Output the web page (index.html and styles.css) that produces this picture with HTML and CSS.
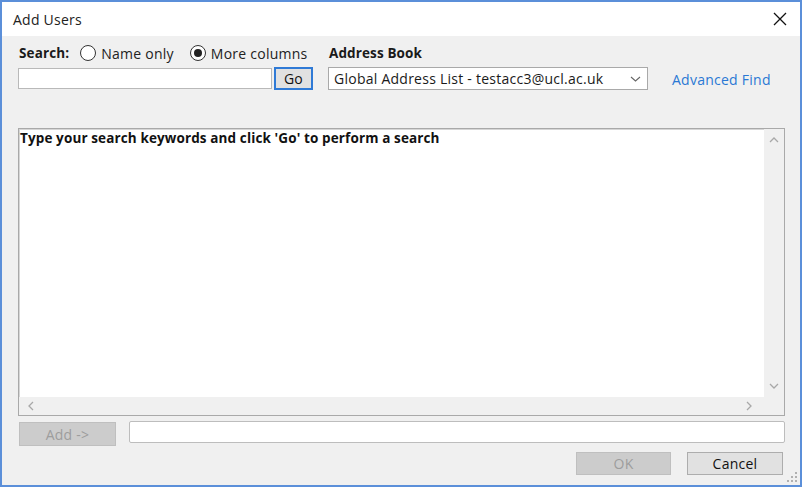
FILE: index.html
```html
<!DOCTYPE html>
<html>
<head>
<meta charset="utf-8">
<link rel="stylesheet" href="styles.css">
</head>
<body>
<div class="window">
  <div class="titlebar">
    <span class="title">Add Users</span>
    <svg class="close" width="14" height="14" viewBox="0 0 14 14"><path d="M1 1 L13 13 M13 1 L1 13" stroke="#111" stroke-width="1.3" fill="none"/></svg>
  </div>
  <div class="body">
    <div class="top">
      <div class="col search-col">
        <div class="row1">
          <span class="lbl">Search:</span>
          <span class="radio first"><span class="circle"></span>Name only</span>
          <span class="radio checked"><span class="circle"></span>More columns</span>
        </div>
        <div class="row2">
          <div class="input search"></div>
          <div class="btn go">Go</div>
        </div>
      </div>
      <div class="col ab-col">
        <div class="row1"><span class="lbl">Address Book</span></div>
        <div class="row2">
          <div class="select">
            <span>Global Address List - testacc3@ucl.ac.uk</span>
            <svg width="11" height="6" viewBox="0 0 11 6"><path d="M1 1 L5.5 5 L10 1" stroke="#666" stroke-width="1.1" fill="none"/></svg>
          </div>
        </div>
      </div>
      <div class="col af-col">
        <div class="row1"></div>
        <div class="row2"><span class="link">Advanced Find</span></div>
      </div>
    </div>
    <div class="list">
      <div class="list-content">Type your search keywords and click 'Go' to perform a search</div>
      <div class="vscroll">
        <svg width="10" height="6" viewBox="0 0 10 6"><path d="M1 5 L5 1 L9 5" stroke="#a8a8a8" stroke-width="1.3" fill="none"/></svg>
        <svg width="10" height="6" viewBox="0 0 10 6"><path d="M1 1 L5 5 L9 1" stroke="#a8a8a8" stroke-width="1.3" fill="none"/></svg>
      </div>
      <div class="hscroll">
        <svg width="6" height="10" viewBox="0 0 6 10"><path d="M5 1 L1 5 L5 9" stroke="#a8a8a8" stroke-width="1.3" fill="none"/></svg>
        <svg width="6" height="10" viewBox="0 0 6 10"><path d="M1 1 L5 5 L1 9" stroke="#a8a8a8" stroke-width="1.3" fill="none"/></svg>
      </div>
      <div class="corner"></div>
    </div>
    <div class="add-row">
      <div class="btn disabled add">Add -&gt;</div>
      <div class="input recip"></div>
    </div>
    <div class="btn-row">
      <div class="btn disabled ok">OK</div>
      <div class="btn cancel">Cancel</div>
    </div>
  </div>
  <svg class="grip" width="10" height="10" viewBox="0 0 10 10">
    <rect x="8" y="0" width="2" height="2" fill="#b0b0b0"/>
    <rect x="4" y="4" width="2" height="2" fill="#b0b0b0"/>
    <rect x="8" y="4" width="2" height="2" fill="#b0b0b0"/>
    <rect x="0" y="8" width="2" height="2" fill="#b0b0b0"/>
    <rect x="4" y="8" width="2" height="2" fill="#b0b0b0"/>
    <rect x="8" y="8" width="2" height="2" fill="#b0b0b0"/>
  </svg>
</div>
</body>
</html>
```

FILE: styles.css
```css
* { box-sizing: border-box; }
html, body { margin: 0; padding: 0; background: #ffffff; }
body {
  font-family: "Open Sans", "Noto Sans", "Liberation Sans", sans-serif;
  font-size: 14px;
  letter-spacing: 0.25px;
  color: #1a1a1a;
}
.window {
  position: relative;
  width: 802px;
  height: 487px;
  border: 2px solid #5b8fd9;
  display: flex;
  flex-direction: column;
  background: #f0f0f0;
}
.titlebar {
  height: 34px;
  flex: none;
  background: #ffffff;
  display: flex;
  align-items: center;
  justify-content: space-between;
  padding: 0 13px 0 11px;
}
.title { color: #222; }
.close { display: block; }
.body {
  flex: 1;
  display: flex;
  flex-direction: column;
  padding: 8px 15px 10px 16px;
}
.top {
  display: flex;
  flex: none;
}
.col { display: flex; flex-direction: column; gap: 5px; }
.search-col { width: 295px; }
.ab-col { width: 320px; margin-left: 15px; }
.af-col { margin-left: 24px; }
.row1 {
  height: 18px;
  display: flex;
  align-items: center;
  white-space: nowrap;
}
.row2 {
  height: 23px;
  display: flex;
  align-items: center;
}
.lbl { font-weight: 700; font-size: 13.5px; letter-spacing: 0.12px; color: #1a1a1a; margin-left: 1px; }
.radio {
  display: flex;
  align-items: center;
  color: #222;
}
.radio.first { margin-left: 11px; }
.radio.checked { margin-left: 16px; }
.circle {
  width: 16px;
  height: 16px;
  border: 1px solid #333;
  border-radius: 50%;
  background: #fff;
  margin-right: 5px;
  display: flex;
  align-items: center;
  justify-content: center;
}
.radio.checked .circle::after {
  content: "";
  width: 8px;
  height: 8px;
  border-radius: 50%;
  background: #222;
}
.input {
  background: #fff;
  border: 1px solid #b9b9b9;
}
.input.search { width: 254px; height: 21px; }
.btn {
  display: flex;
  align-items: center;
  justify-content: center;
  border: 1px solid #adadad;
  background: #e1e1e1;
  color: #111;
}
.btn.go {
  width: 39px;
  height: 23px;
  margin-left: 2px;
  border: 2px solid #2f7ad6;
}
.select {
  width: 320px;
  height: 23px;
  background: #fff;
  border: 1px solid #a9a9a9;
  display: flex;
  align-items: center;
  justify-content: space-between;
  padding: 0 6px 0 5px;
  color: #1a1a1a;
  white-space: nowrap;
}
.select svg { display: block; }
.link { color: #2a78d4; white-space: nowrap; padding-top: 2px; }
.list {
  flex: 1;
  margin-top: 38px;
  background: #fff;
  border: 1px solid #a9a9a9;
  box-shadow: inset 1px 1px 0 #d6d6d6;
  display: grid;
  grid-template-columns: 1fr 20px;
  grid-template-rows: 1fr 18px;
}
.list-content {
  padding: 1px 1px;
  font-weight: 700;
  font-size: 13.5px;
  letter-spacing: 0.12px;
  color: #111;
  line-height: 17px;
}
.vscroll {
  background: #f0f0f0;
  display: flex;
  flex-direction: column;
  justify-content: space-between;
  align-items: center;
  padding: 8px 0 8px 0;
}
.hscroll {
  background: #f0f0f0;
  display: flex;
  justify-content: space-between;
  align-items: center;
  padding: 0 12px 0 9px;
}
.corner { background: #f0f0f0; }
.vscroll svg, .hscroll svg { display: block; }
.add-row {
  flex: none;
  margin-top: 5px;
  height: 25px;
  display: flex;
  align-items: flex-start;
}
.btn.disabled {
  background: #cccccc;
  border: 1px solid #bfbfbf;
  color: #9d9d9d;
}
.btn.add { width: 97px; height: 24px; margin: 1px 0 0 1px; }
.input.recip {
  flex: 1;
  height: 22px;
  margin-left: 13px;
  border-radius: 2px;
  border-color: #bdbdbd;
}
.btn-row {
  flex: none;
  margin-top: 6px;
  display: flex;
  justify-content: flex-end;
  gap: 16px;
  margin-right: 2px;
}
.btn.ok { width: 95px; height: 23px; }
.btn.cancel { width: 96px; height: 23px; }
.grip {
  position: absolute;
  right: 3px;
  bottom: 3px;
}
```
